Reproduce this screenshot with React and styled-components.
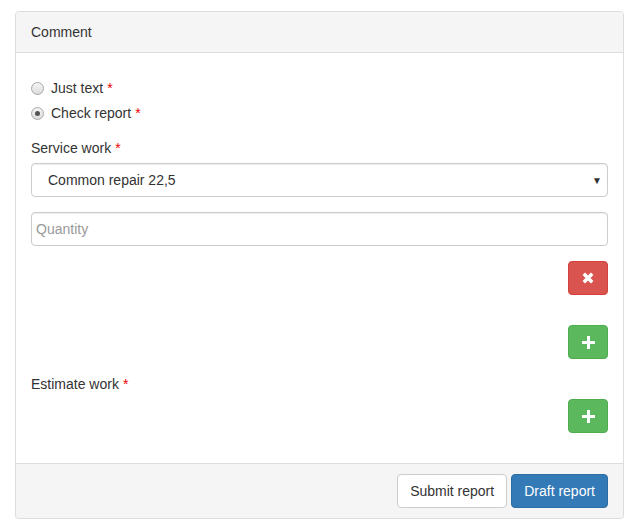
import React, { useState } from "react";
import styled, { createGlobalStyle } from "styled-components";

const Global = createGlobalStyle`
	* { box-sizing: border-box; }
	body {
		margin: 0;
		padding: 11px 15px 0;
		background: #fff;
		font-family: "Liberation Sans", Arial, sans-serif;
		font-size: 14px;
		line-height: 20px;
		color: #333;
	}
`;

const Panel = styled.div`
	border: 1px solid #ddd;
	border-radius: 4px;
	background: #fff;
	box-shadow: 0 1px 1px rgba(0, 0, 0, 0.05);
`;

const PanelHeading = styled.div`
	padding: 10px 15px;
	background: #f5f5f5;
	border-bottom: 1px solid #ddd;
	border-radius: 3px 3px 0 0;
`;

const PanelBody = styled.div`
	padding: 15px;
	display: flex;
	flex-flow: column nowrap;
`;

const PanelFooter = styled.div`
	padding: 10px 15px;
	background: #f5f5f5;
	border-top: 1px solid #ddd;
	border-radius: 0 0 3px 3px;
	display: flex;
	justify-content: flex-end;
	gap: 4px;
`;

const RadioRow = styled.label`
	display: flex;
	align-items: center;
	height: 20px;
	margin-top: ${pr => pr.first ? "10px" : "5px"};
	cursor: pointer;
`;

const RadioDot = styled.span`
	width: 13px;
	height: 13px;
	border-radius: 50%;
	border: 1px solid #a8a8a8;
	background: linear-gradient(#f4f4f4, #dcdcdc);
	margin: 0 7px 0 0;
	display: flex;
	align-items: center;
	justify-content: center;
	&::after {
		content: "";
		display: ${pr => pr.checked ? "block" : "none"};
		width: 5px;
		height: 5px;
		border-radius: 50%;
		background: #555;
	}
`;

const Star = styled.span`
	color: #e00;
	margin-left: 4px;
`;

const Label = styled.div`
	height: 20px;
	margin-top: ${pr => pr.top || "0"};
	margin-bottom: 5px;
`;

const SelectWrap = styled.div`
	position: relative;
	height: 34px;
`;

const Select = styled.select`
	width: 100%;
	height: 34px;
	appearance: none;
	-webkit-appearance: none;
	padding: 0 30px 0 16px;
	font-family: inherit;
	font-size: 14px;
	color: #333;
	background: #fff;
	border: 1px solid #ccc;
	border-radius: 4px;
	box-shadow: inset 0 1px 1px rgba(0, 0, 0, 0.075);
`;

const Arrow = styled.span`
	position: absolute;
	right: 6px;
	top: 8px;
	font-size: 10px;
	color: #333;
	pointer-events: none;
`;

const Input = styled.input`
	width: 100%;
	height: 34px;
	margin-top: 15px;
	padding: 0 4px;
	font-family: inherit;
	font-size: 14px;
	color: #555;
	border: 1px solid #ccc;
	border-radius: 4px;
	box-shadow: inset 0 1px 1px rgba(0, 0, 0, 0.075);
	&::placeholder { color: #999; }
`;

const IconRow = styled.div`
	display: flex;
	justify-content: flex-end;
	margin-top: ${pr => pr.top};
`;

const colors = {
	danger: ["#d9534f", "#d43f3a", "#fff"],
	success: ["#5cb85c", "#4cae4c", "#fff"],
	primary: ["#337ab7", "#2e6da4", "#fff"],
	default: ["#fff", "#ccc", "#333"],
};

const Btn = styled.button`
	height: 34px;
	padding: 6px 12px;
	font-family: inherit;
	font-size: 14px;
	line-height: 20px;
	border-radius: 4px;
	background: ${pr => colors[pr.kind][0]};
	border: 1px solid ${pr => colors[pr.kind][1]};
	color: ${pr => colors[pr.kind][2]};
	display: flex;
	align-items: center;
	justify-content: center;
	cursor: pointer;
`;

const IconBtn = styled(Btn)`
	width: 40px;
	padding: 0;
`;

const PlusIcon = () => (
	<svg width="13" height="13" viewBox="0 0 13 13">
		<path d="M5 0h3v5h5v3H8v5H5V8H0V5h5z" fill="#fff" />
	</svg>
);

const RemoveIcon = () => (
	<svg width="12" height="12" viewBox="0 0 12 12">
		<path d="M1.8 1.8L10.2 10.2M10.2 1.8L1.8 10.2" stroke="#fff" strokeWidth="3.6" />
	</svg>
);

const App = () => {
	const [mode, setMode] = useState("check");
	return (
		<>
			<Global />
			<Panel>
				<PanelHeading>Comment</PanelHeading>
				<PanelBody>
					<RadioRow first onClick={() => setMode("text")}>
						<RadioDot checked={mode === "text"} />
						Just text<Star>*</Star>
					</RadioRow>
					<RadioRow onClick={() => setMode("check")}>
						<RadioDot checked={mode === "check"} />
						Check report<Star>*</Star>
					</RadioRow>
					<Label top="15px">Service work<Star>*</Star></Label>
					<SelectWrap>
						<Select defaultValue="a">
							<option value="a">Common repair 22,5</option>
						</Select>
						<Arrow>▼</Arrow>
					</SelectWrap>
					<Input placeholder="Quantity" />
					<IconRow top="15px">
						<IconBtn kind="danger"><RemoveIcon /></IconBtn>
					</IconRow>
					<IconRow top="30px">
						<IconBtn kind="success"><PlusIcon /></IconBtn>
					</IconRow>
					<Label top="15px">Estimate work<Star>*</Star></Label>
					<IconRow top="0">
						<IconBtn kind="success"><PlusIcon /></IconBtn>
					</IconRow>
					<div style={{ height: 15 }} />
				</PanelBody>
				<PanelFooter>
					<Btn kind="default">Submit report</Btn>
					<Btn kind="primary">Draft report</Btn>
				</PanelFooter>
			</Panel>
		</>
	);
};

export default App;
